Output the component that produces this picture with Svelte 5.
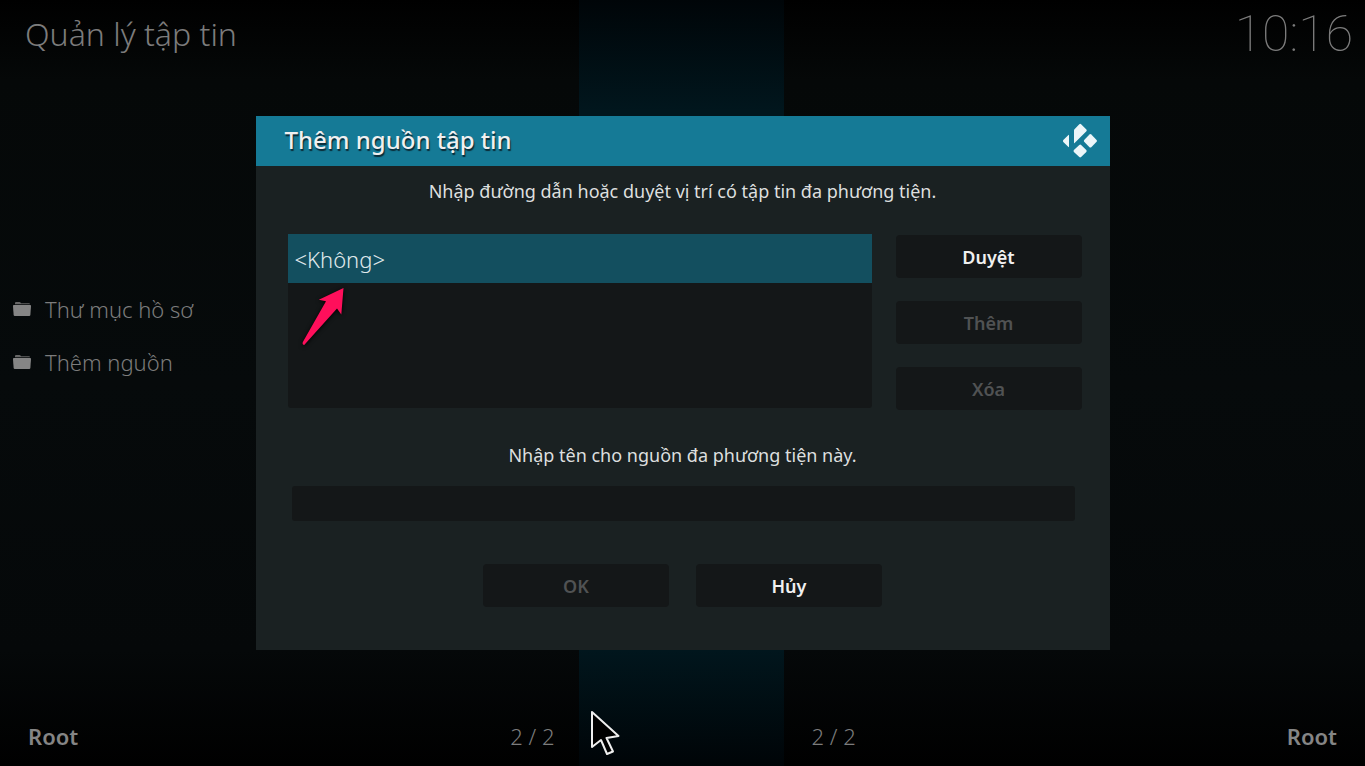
<script>
  const folders = ['Thư mục hồ sơ', 'Thêm nguồn'];
  const sourceActions = [
    { label: 'Duyệt', disabled: false },
    { label: 'Thêm', disabled: true },
    { label: 'Xóa', disabled: true }
  ];
  let name = $state('');
</script>

<div class="screen">
  <header class="topbar">
    <h1>Quản lý tập tin</h1>
    <time>10:16</time>
  </header>

  <main class="panels">
    <section class="panel">
      <ul class="files">
        {#each folders as folder}
          <li>
            <a href="#folder">
              <svg width="18" height="14" viewBox="0 0 18 14" aria-hidden="true">
                <path d="M2 1.600V1q0-1 1-1h3.500q.8 0 1.200.8l.3.500H16q1 0 1 1H2z" fill="#666" />
                <path d="M.8 3h16.400q.8 0 .8.900l-.6 8.900q-.1 1.200-1.200 1.200H1.800q-1.100 0-1.200-1.200L0 3.900Q0 3 .8 3z" fill="#858585" />
              </svg>
              {folder}
            </a>
          </li>
        {/each}
      </ul>
      <footer><strong>Root</strong><span>2 / 2</span></footer>
    </section>
    <div class="divider"></div>
    <section class="panel right">
      <footer><span>2 / 2</span><strong>Root</strong></footer>
    </section>
  </main>

  <div class="overlay">
    <div class="dialog" role="dialog" aria-labelledby="dialog-title">
      <div class="titlebar">
        <h2 id="dialog-title">Thêm nguồn tập tin</h2>
        <svg width="36" height="36" viewBox="0 0 36 36" fill="#edf6f9" aria-hidden="true">
          <path d="M17.300 1.300q.9-.9 1.800 0l5.300 5.300q.8.800 0 1.600L12.600 20q-.6.500-.6-.4V7.400q0-.7.500-1.200z" />
          <path d="M6.200 12.200q.8-.8.800.3v11q0 1.100-.8.300L1.300 18.900q-.8-.9 0-1.800z" />
          <path d="M27.500 11.500q.9-.8 1.800 0l5.300 5.500q.8.900 0 1.800l-5.300 5.400q-.9.800-1.800 0L22.200 18.800q-.8-.9 0-1.800z" />
          <path d="M17.300 22q.9-.8 1.800 0l5.200 5.100q.8.900 0 1.800l-5.200 5.200q-.9.900-1.800 0l-5.400-5.200q-.8-.9 0-1.800z" />
        </svg>
      </div>

      <div class="content">
        <p>Nhập đường dẫn hoặc duyệt vị trí có tập tin đa phương tiện.</p>
        <div class="sources">
          <div class="paths">
            <button class="path">&lt;Không&gt;</button>
            <svg class="pointer" width="46" height="64" viewBox="0 0 46 64" aria-hidden="true">
              <path d="M42.500 4 17.800 15.800l7.200 1.400L2 57.800q-1.200 2.800 1.200 3.200L36 24.500l4.300 6z" fill="#ff0f5b" />
            </svg>
          </div>
          <div class="actions">
            {#each sourceActions as action}
              <button class="button" disabled={action.disabled}>{action.label}</button>
            {/each}
          </div>
        </div>
        <label for="source-name">Nhập tên cho nguồn đa phương tiện này.</label>
        <input id="source-name" type="text" bind:value={name} />
        <div class="confirm">
          <button class="button" disabled>OK</button>
          <button class="button">Hủy</button>
        </div>
      </div>
    </div>
  </div>

  <svg class="cursor" width="32" height="46" viewBox="0 0 32 46" aria-hidden="true">
    <path d="M2 2v35l9-7 6 14 6-2.500-6.500-13.500L28.500 26z" fill="#000" stroke="#eee" stroke-width="2" stroke-linejoin="round" />
  </svg>
</div>

<style>
  :global(body) {
    margin: 0;
    background: #000;
  }

  .screen {
    position: relative;
    display: flex;
    flex-direction: column;
    min-height: 100vh;
    overflow: hidden;
    font-family: 'Noto Sans', sans-serif;
    font-weight: 300;
    color: #7c7c7c;
    background: linear-gradient(#000 0, #050808 80px, #060a0b 50%, #050809 650px, #000 100%);
  }

  .topbar {
    position: absolute;
    inset: 0 0 auto;
    display: flex;
    justify-content: space-between;
    align-items: center;
    padding: 0 12px 0 25px;
    height: 68px;
  }

  h1 {
    margin: 0;
    font-size: 32px;
    font-weight: 300;
    line-height: 66px;
  }

  time {
    font-family: Roboto, sans-serif;
    font-size: 50px;
    font-weight: 100;
    line-height: 68px;
  }

  .panels {
    flex: 1;
    display: grid;
    grid-template-columns: 1fr 205px 1fr;
    margin-left: -3px;
  }

  .panel {
    display: flex;
    flex-direction: column;
    justify-content: flex-end;
  }

  .divider {
    background: linear-gradient(#000508 0, #01161d 110px, #01161d 650px, #000407 100%);
  }

  .files {
    flex: 1;
    display: flex;
    flex-direction: column;
    justify-content: center;
    margin: 0;
    padding: 0 16px 36px;
    list-style: none;
  }

  .files a {
    display: flex;
    align-items: center;
    gap: 14px;
    height: 53px;
    color: inherit;
    font-size: 22px;
    text-decoration: none;
  }

  footer {
    display: flex;
    justify-content: space-between;
    align-items: center;
    height: 60px;
    padding: 0 24px 0 31px;
    font-size: 22px;
  }

  .right footer {
    padding: 0 28px 0 28px;
  }

  strong {
    font-weight: 600;
    color: #858585;
  }

  .overlay {
    position: absolute;
    inset: 0;
    display: grid;
    place-items: center;
  }

  .dialog {
    width: 854px;
    max-width: 100%;
    color: #dddfdf;
    background: #1a2122;
  }

  .titlebar {
    display: flex;
    align-items: center;
    justify-content: space-between;
    height: 50px;
    padding: 0 12px 0 29px;
    background: #157a96;
  }

  h2 {
    margin: 0;
    color: #f0f0f0;
    font-size: 24px;
    font-weight: 500;
    line-height: 46px;
    padding-bottom: 2px;
    text-shadow: 1px 2px 1px #0a2a35;
  }

  .content {
    display: flex;
    flex-direction: column;
    padding: 12px 28px 43px 32px;
  }

  p,
  label {
    margin: 0 4px 0 0;
    font-size: 18px;
    font-weight: 400;
    line-height: 26px;
    text-align: center;
  }

  .sources {
    display: flex;
    gap: 24px;
    margin: 30px 0 32px;
  }

  .paths {
    position: relative;
    flex: 1;
    height: 174px;
    background: #141718;
    border-radius: 3px;
  }

  .path {
    display: block;
    width: 100%;
    height: 49px;
    padding: 0 7px;
    border: 0;
    background: #134f5f;
    color: #e0eaed;
    font: inherit;
    font-size: 22px;
    text-align: left;
  }

  .pointer {
    position: absolute;
    left: 13px;
    top: 50px;
    filter: drop-shadow(0 1px 2px #000);
  }

  .actions {
    display: flex;
    flex-direction: column;
    gap: 23px;
    padding-top: 1px;
  }

  .button {
    width: 186px;
    height: 43px;
    padding: 0;
    border: 0;
    border-radius: 4px;
    background: #141718;
    color: #f0f0f0;
    font: inherit;
    font-size: 18px;
    font-weight: 600;
  }

  .button:disabled {
    color: #505253;
  }

  input {
    height: 35px;
    margin: 18px 7px 43px 4px;
    padding: 0 8px;
    border: 0;
    border-radius: 3px;
    background: #141718;
    color: #e4e6e6;
    font: inherit;
    font-size: 18px;
  }

  .confirm {
    display: flex;
    justify-content: center;
    gap: 27px;
    margin-right: 4px;
  }

  .cursor {
    position: absolute;
    left: 590px;
    top: 710px;
  }
</style>
